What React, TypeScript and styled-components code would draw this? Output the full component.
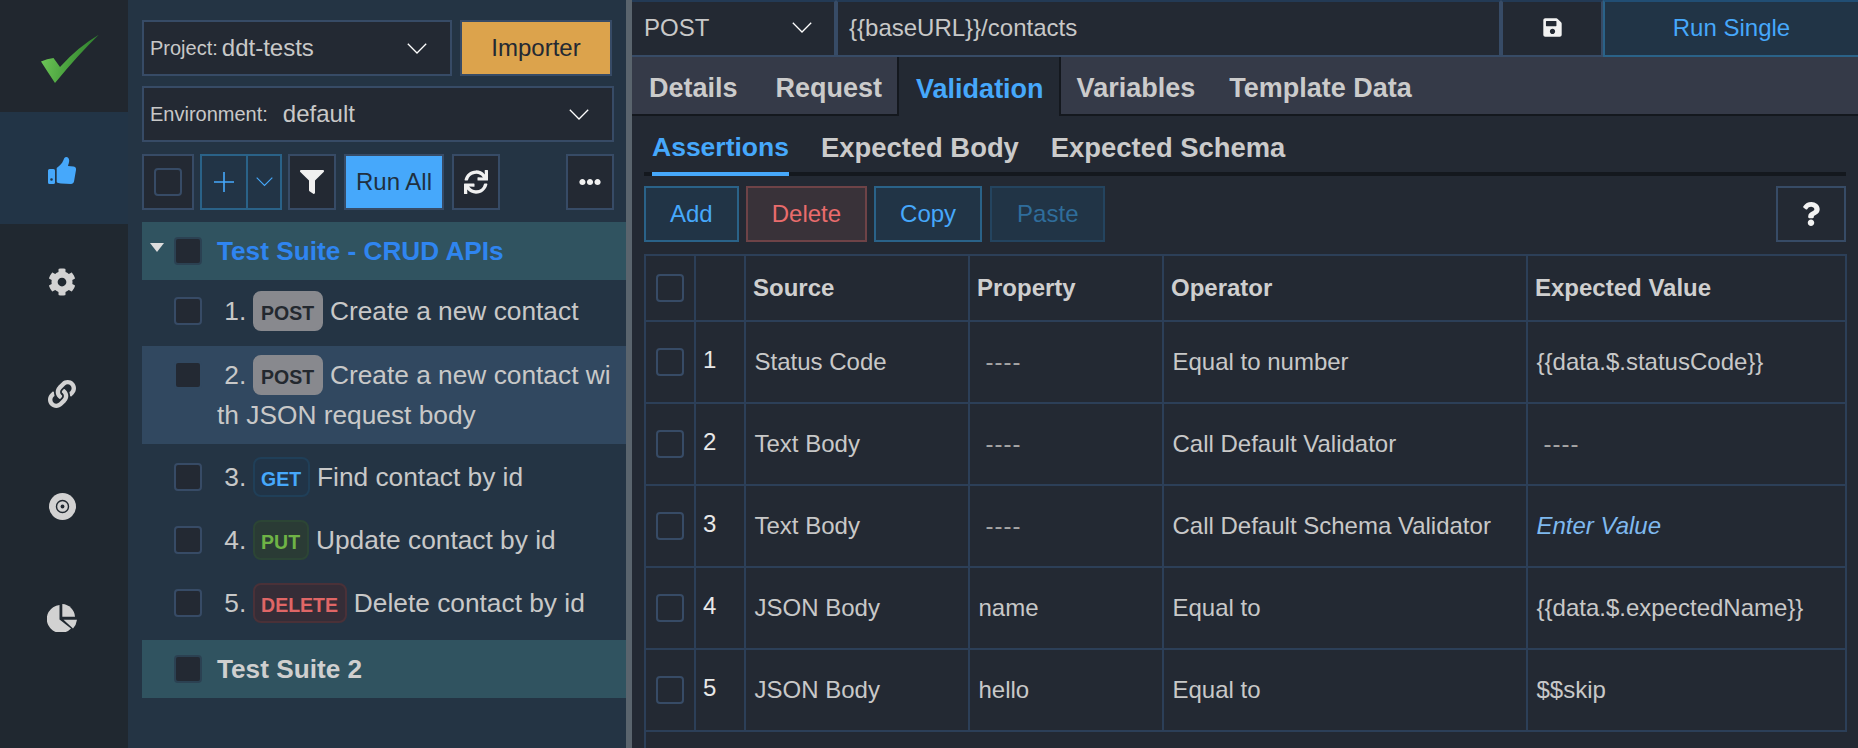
import React from 'react';
import styled, { createGlobalStyle } from 'styled-components';
import { FaCog, FaLink, FaFilter, FaSync, FaEllipsisH, FaSave, FaQuestion } from 'react-icons/fa';

const GlobalStyle = createGlobalStyle`
  html, body {
    margin: 0;
    padding: 0;
    background: #232933;
  }
  * {
    box-sizing: border-box;
  }
`;

const Page = styled.div`
  display: flex;
  width: 1858px;
  height: 748px;
  overflow: hidden;
  font-family: 'Liberation Sans', Arial, sans-serif;
  color: #c8c8c8;
`;

/* nav rail */
const Rail = styled.nav`
  display: flex;
  flex-direction: column;
  width: 128px;
  flex-shrink: 0;
  background: #202830;
`;

const RailItem = styled.div<{ $active?: boolean }>`
  display: flex;
  align-items: center;
  justify-content: center;
  height: 112px;
  padding: 4px 4px 0 0;
  font-size: 28px;
  color: ${(p) => (p.$active ? '#46a8fb' : '#d2d2d2')};
  background: ${(p) => (p.$active ? '#223446' : 'transparent')};
`;

const LogoItem = styled(RailItem)`
  padding: 5px 0 0 11px;
  background: #21272f;
`;

/* test list side */
const ListPane = styled.section`
  display: flex;
  flex-direction: column;
  width: 498px;
  flex-shrink: 0;
  padding: 20px 0 0 14px;
  background: #243444;
`;

const TopRow = styled.div<{ $pr: number }>`
  display: flex;
  gap: 8px;
  height: 56px;
  margin-bottom: 10px;
  padding-right: ${(p) => p.$pr}px;
`;

const Select = styled.div`
  display: flex;
  align-items: center;
  flex: 1;
  padding: 0 23px 0 6px;
  background: #232933;
  border: 2px solid #374b66;
`;

const SelectLabel = styled.span`
  font-size: 20px;
`;

const SelectValue = styled.span<{ $gap: number }>`
  flex: 1;
  margin-left: ${(p) => p.$gap}px;
  font-size: 24px;
`;

const ImportButton = styled.button`
  width: 152px;
  flex-shrink: 0;
  padding: 0;
  font: inherit;
  font-size: 24px;
  color: #232933;
  background: #dca34c;
  border: 2px solid #374b66;
`;

const Toolbar = styled.div`
  display: flex;
  height: 56px;
  margin: 2px 0 12px;
  padding-right: 12px;
`;

const ToolButton = styled.button<{ $w: number; $ml?: number }>`
  display: flex;
  align-items: center;
  justify-content: center;
  width: ${(p) => p.$w}px;
  margin-left: ${(p) => p.$ml ?? 0}px;
  padding: 0;
  font: inherit;
  font-size: 24px;
  color: #f0f0f0;
  background: #232933;
  border: 2px solid #374b66;
`;

const RunAll = styled(ToolButton)`
  color: #20303f;
  background: #46a8fb;
`;

const SplitButton = styled.div`
  display: flex;
  width: 82px;
  margin-left: 6px;
  background: #223446;
  border: 2px solid #2a6288;
`;

const SplitPart = styled.span<{ $w: number; $divide?: boolean }>`
  display: flex;
  align-items: center;
  justify-content: center;
  width: ${(p) => p.$w}px;
  border-right: ${(p) => (p.$divide ? '2px solid #2a6288' : 'none')};
`;

const Check = styled.span<{ $tone?: 'row' | 'suite' | 'selected' }>`
  display: block;
  width: 28px;
  height: 28px;
  flex-shrink: 0;
  background: #232933;
  border-radius: 4px;
  border: 2px solid
    ${(p) =>
      p.$tone === 'selected' ? '#314860' : p.$tone === 'suite' ? '#2b4152' : '#374b66'};
`;

const SuiteRow = styled.div<{ $mt: number }>`
  display: flex;
  align-items: center;
  height: 58px;
  margin-top: ${(p) => p.$mt}px;
  padding-left: 8px;
  background: #305360;
`;

const Caret = styled.span<{ $show?: boolean }>`
  width: 0;
  height: 0;
  margin: -8px 10px 0 0;
  border-left: 7px solid transparent;
  border-right: 7px solid transparent;
  border-top: 9px solid ${(p) => (p.$show ? '#dddddd' : 'transparent')};
`;

const SuiteTitle = styled.span<{ $accent?: boolean }>`
  margin-left: 15px;
  font-size: 26.2px;
  font-weight: 700;
  color: ${(p) => (p.$accent ? '#2f85f0' : '#cfcfcf')};
`;

const TestRow = styled.div<{ $selected?: boolean; $mt: number }>`
  display: flex;
  align-items: flex-start;
  margin-top: ${(p) => p.$mt}px;
  padding: ${(p) => (p.$selected ? '9px' : '8px')} 10px ${(p) => (p.$selected ? '9px' : '8px')} 32px;
  background: ${(p) => (p.$selected ? '#314860' : 'transparent')};
`;

const RowCheck = styled.span`
  display: block;
  margin-top: 6px;
`;

const TestText = styled.div`
  margin-left: 15px;
  flex: 1;
  font-size: 26.3px;
  line-height: 40px;
  word-break: break-all;
`;

const badgeTones = {
  POST: { bg: '#88898e', border: '#88898e', fg: '#23282f' },
  GET: { bg: '#213447', border: '#203f58', fg: '#46a8fb' },
  PUT: { bg: '#2a3b35', border: '#2c4535', fg: '#6fb346' },
  DELETE: { bg: '#352d37', border: '#4a3138', fg: '#e06666' },
};

const Badge = styled.span<{ $m: keyof typeof badgeTones }>`
  display: inline-block;
  height: 40px;
  margin-left: -1px;
  padding: 2px 6.5px 0;
  vertical-align: top;
  font-size: 19.5px;
  font-weight: 700;
  line-height: 36px;
  word-break: normal;
  color: ${(p) => badgeTones[p.$m].fg};
  background: ${(p) => badgeTones[p.$m].bg};
  border: 2px solid ${(p) => badgeTones[p.$m].border};
  border-radius: 8px;
`;

const Gutter = styled.div`
  width: 6px;
  flex-shrink: 0;
  background: #5a646d;
`;

/* editor side */
const Editor = styled.main`
  display: flex;
  flex-direction: column;
  flex: 1;
  min-width: 0;
  background: #232933;
`;

const UrlBar = styled.div`
  display: flex;
  height: 57px;
  flex-shrink: 0;
`;

const UrlCell = styled.div<{ $w?: number }>`
  display: flex;
  align-items: center;
  ${(p) => (p.$w ? `width: ${p.$w}px; flex-shrink: 0;` : 'flex: 1;')}
  padding-bottom: 2px;
  font-size: 24px;
  border: 2px solid #374b66;
  border-top-color: #233a55;
`;

const MethodCell = styled(UrlCell)`
  justify-content: space-between;
  padding: 0 22px 2px 12px;
  border-left: none;
`;

const AddressCell = styled(UrlCell)`
  padding-left: 11px;
`;

const SaveCell = styled(UrlCell)`
  justify-content: center;
  color: #f2f2f2;
`;

const RunCell = styled(UrlCell)`
  justify-content: center;
  color: #46a8fb;
  background: #213446;
  border-color: #2a6288;
  border-top-color: #214e74;
  border-right: none;
`;

const TabBar = styled.div`
  display: flex;
  height: 59px;
  flex-shrink: 0;
  background: #353a48;
  border-bottom: 2px solid #14181e;
`;

const Tab = styled.div<{ $active?: boolean; $after?: number }>`
  display: flex;
  align-items: center;
  height: ${(p) => (p.$active ? '59px' : '57px')};
  padding: 6px ${(p) => (p.$active ? '15px' : '17px')} 0 17px;
  margin-right: ${(p) => p.$after ?? 0}px;
  font-size: 27px;
  font-weight: 700;
  color: ${(p) => (p.$active ? '#46a8fb' : '#cbcbcb')};
  background: ${(p) => (p.$active ? '#232933' : 'transparent')};
  box-shadow: ${(p) => (p.$active ? '-2px 0 0 #14181e, 2px 0 0 #14181e' : 'none')};
`;

const Body = styled.div`
  display: flex;
  flex-direction: column;
  flex: 1;
  min-height: 0;
  padding: 0 12px;
`;

const SubTabs = styled.div`
  display: flex;
  gap: 32px;
  height: 60px;
  flex-shrink: 0;
  padding-left: 8px;
  border-bottom: 4px solid #14181e;
`;

const SubTab = styled.div<{ $active?: boolean }>`
  height: 60px;
  padding-top: 16px;
  font-size: ${(p) => (p.$active ? '26.5px' : '27.4px')};
  font-weight: 700;
  color: ${(p) => (p.$active ? '#46a8fb' : '#cbcbcb')};
  border-bottom: 4px solid ${(p) => (p.$active ? '#46a8fb' : 'transparent')};
`;

const ActionRow = styled.div`
  display: flex;
  gap: 7px;
  height: 56px;
  margin: 10px 0 12px;
  flex-shrink: 0;
`;

const actionTones = {
  add: { bg: '#213446', border: '#2a6288', fg: '#46a8fb' },
  del: { bg: '#393239', border: '#6e4347', fg: '#e96c6c' },
  off: { bg: '#213446', border: '#24445f', fg: '#2f6d9b' },
};

const ActionButton = styled.button<{ $tone: keyof typeof actionTones }>`
  padding: 0 24px;
  font: inherit;
  font-size: 24px;
  color: ${(p) => actionTones[p.$tone].fg};
  background: ${(p) => actionTones[p.$tone].bg};
  border: 2px solid ${(p) => actionTones[p.$tone].border};
`;

const PasteButton = styled(ActionButton)`
  margin-left: 1px;
  padding: 0 25px;
`;

const HelpButton = styled.button`
  display: flex;
  align-items: center;
  justify-content: center;
  width: 70px;
  margin-left: auto;
  padding: 0;
  font-size: 24px;
  color: #f2f2f2;
  background: #232933;
  border: 2px solid #374b66;
`;

const TableWrap = styled.div`
  flex: 1;
  min-height: 0;
  border-left: 2px solid #2c3f58;
`;

const Table = styled.table`
  width: 1200px;
  table-layout: fixed;
  border-collapse: collapse;
  font-size: 24px;
`;

const HeadCell = styled.th<{ $w: number }>`
  width: ${(p) => p.$w}px;
  height: 66px;
  padding: 0 0 0 7px;
  text-align: left;
  font-weight: 700;
  color: #cfcfcf;
  border: 2px solid #2c3f58;
  &:first-child {
    border-left: none;
  }
`;

const Cell = styled.td`
  height: 82px;
  padding: 0 0 0 8.5px;
  border: 2px solid #2c3f58;
  white-space: nowrap;
  &:first-child {
    border-left: none;
  }
`;

const CheckCell = styled(Cell)`
  padding-left: 10px;
`;

const HeadCheckCell = styled(HeadCell)`
  padding-left: 10px;
`;

const NumberCell = styled(Cell)`
  padding: 0 0 4px 7px;
  color: #e8e8e8;
`;

const Dashes = styled.span`
  margin-left: 7px;
  letter-spacing: 1px;
  color: #a4a4a4;
`;

const Placeholder = styled.span`
  font-style: italic;
  color: #7fb9ef;
`;

function Chevron({ w = 20, color = '#ffffff' }: { w?: number; color?: string }) {
  return (
    <svg width={w} height={w * 0.55} viewBox="0 0 20 11" fill="none">
      <path d="M0.8 0.8 L10 10 L19.2 0.8" stroke={color} strokeWidth="1.3" />
    </svg>
  );
}

function Logo() {
  return (
    <svg width="60" height="50" viewBox="0 0 60 50">
      <defs>
        <linearGradient id="tick" x1="0" y1="0" x2="1" y2="0.2">
          <stop offset="0" stopColor="#74cc5c" />
          <stop offset="0.55" stopColor="#4ba33f" />
          <stop offset="1" stopColor="#2c7a2c" />
        </linearGradient>
      </defs>
      <path
        d="M1 27.5 Q7 24.5 13.5 24 L20 33 Q38 13 58.8 0.8 Q38 21 15 49 Q7 37 1 27.5 Z"
        fill="url(#tick)"
      />
    </svg>
  );
}

function ThumbIcon() {
  return (
    <svg width="28" height="27" viewBox="0 0 28 27" fill="currentColor">
      <path
        fillRule="evenodd"
        d="M1.5 12H5.5A1.5 1.5 0 0 1 7 13.5V25.5A1.5 1.5 0 0 1 5.5 27H1.5A1.5 1.5 0 0 1 0 25.5V13.5A1.5 1.5 0 0 1 1.5 12ZM3.5 21.2A1.3 1.3 0 1 0 3.5 23.8A1.3 1.3 0 1 0 3.5 21.2Z"
      />
      <path d="M8.7 11C11 9 14 7 15.5 3C16 1 17 0 18.2 0C20 0 21.2 1.6 21.2 3.5C21.2 5.5 20.3 7.5 20 9L25.5 9.6C27.4 9.8 28.3 11.3 28 13L26 24.5C25.7 26 24.5 27 23 27L13 26.5C11 26.3 9.5 26 8.7 25Z" />
    </svg>
  );
}

function TargetIcon() {
  return (
    <svg width="27" height="27" viewBox="0 0 27 27">
      <circle cx="13.5" cy="13.5" r="13.5" fill="currentColor" />
      <circle cx="13.5" cy="13.5" r="6" fill="none" stroke="#202830" strokeWidth="1.4" />
      <circle cx="13.5" cy="13.5" r="1.9" fill="#202830" />
    </svg>
  );
}

function PieIcon() {
  return (
    <svg width="30" height="28" viewBox="0 0 30 28" fill="currentColor">
      <path d="M12.5 1A14 14 0 1 0 24 24.5L12.5 15.5Z" />
      <path d="M15.3 0A13.5 13.5 0 0 1 28 12.7H15.3Z" />
      <path d="M16.5 15.8H30Q29.3 21 26 24.6Z" />
    </svg>
  );
}

const tests: { n: number; m: keyof typeof badgeTones; text: string; mt: number }[] = [
  { n: 3, m: 'GET', text: 'Find contact by id', mt: 5 },
  { n: 4, m: 'PUT', text: 'Update contact by id', mt: 7 },
  { n: 5, m: 'DELETE', text: 'Delete contact by id', mt: 7 },
];

const assertions = [
  { source: 'Status Code', prop: '', op: 'Equal to number', value: '{{data.$.statusCode}}' },
  { source: 'Text Body', prop: '', op: 'Call Default Validator', value: '' },
  { source: 'Text Body', prop: '', op: 'Call Default Schema Validator', value: 'enter' },
  { source: 'JSON Body', prop: 'name', op: 'Equal to', value: '{{data.$.expectedName}}' },
  { source: 'JSON Body', prop: 'hello', op: 'Equal to', value: '$$skip' },
];

export default function App() {
  return (
    <Page>
      <GlobalStyle />
      <Rail>
        <LogoItem>
          <Logo />
        </LogoItem>
        <RailItem $active>
          <ThumbIcon />
        </RailItem>
        <RailItem>
          <FaCog />
        </RailItem>
        <RailItem>
          <FaLink />
        </RailItem>
        <RailItem>
          <TargetIcon />
        </RailItem>
        <RailItem>
          <PieIcon />
        </RailItem>
      </Rail>

      <ListPane>
        <TopRow $pr={14}>
          <Select>
            <SelectLabel>Project:</SelectLabel>
            <SelectValue $gap={4}>ddt-tests</SelectValue>
            <Chevron />
          </Select>
          <ImportButton>Importer</ImportButton>
        </TopRow>
        <TopRow $pr={12}>
          <Select>
            <SelectLabel>Environment:</SelectLabel>
            <SelectValue $gap={15}>default</SelectValue>
            <Chevron />
          </Select>
        </TopRow>
        <Toolbar>
          <ToolButton $w={52}>
            <Check />
          </ToolButton>
          <SplitButton>
            <SplitPart $w={46} $divide>
              <svg width="20" height="20" viewBox="0 0 20 20">
                <path d="M10 0V20M0 10H20" stroke="#46a8fb" strokeWidth="1.6" />
              </svg>
            </SplitPart>
            <SplitPart $w={32}>
              <Chevron w={17} color="#46a8fb" />
            </SplitPart>
          </SplitButton>
          <ToolButton $w={48} $ml={6}>
            <FaFilter />
          </ToolButton>
          <RunAll $w={100} $ml={8}>
            Run All
          </RunAll>
          <ToolButton $w={48} $ml={8}>
            <FaSync />
          </ToolButton>
          <ToolButton $w={48} $ml={66}>
            <FaEllipsisH size={22} />
          </ToolButton>
        </Toolbar>

        <SuiteRow $mt={0}>
          <Caret $show />
          <Check $tone="suite" />
          <SuiteTitle $accent>Test Suite - CRUD APIs</SuiteTitle>
        </SuiteRow>
        <TestRow $mt={3}>
          <RowCheck>
            <Check />
          </RowCheck>
          <TestText>
            &nbsp;1. <Badge $m="POST">POST</Badge> Create a new contact
          </TestText>
        </TestRow>
        <TestRow $selected $mt={7}>
          <RowCheck>
            <Check $tone="selected" />
          </RowCheck>
          <TestText>
            &nbsp;2. <Badge $m="POST">POST</Badge> Create a new contact with JSON request body
          </TestText>
        </TestRow>
        {tests.map((t) => (
          <TestRow key={t.n} $mt={t.mt}>
            <RowCheck>
              <Check />
            </RowCheck>
            <TestText>
              &nbsp;{t.n}. <Badge $m={t.m}>{t.m}</Badge> {t.text}
            </TestText>
          </TestRow>
        ))}
        <SuiteRow $mt={9}>
          <Caret />
          <Check $tone="suite" />
          <SuiteTitle>Test Suite 2</SuiteTitle>
        </SuiteRow>
      </ListPane>

      <Gutter />

      <Editor>
        <UrlBar>
          <MethodCell $w={204}>
            POST
            <Chevron />
          </MethodCell>
          <AddressCell>{'{{baseURL}}/contacts'}</AddressCell>
          <SaveCell $w={102}>
            <FaSave size={21} />
          </SaveCell>
          <RunCell $w={255}>Run Single</RunCell>
        </UrlBar>
        <TabBar>
          <Tab $after={4}>Details</Tab>
          <Tab>Request</Tab>
          <Tab $active $after={1}>
            Validation
          </Tab>
          <Tab>Variables</Tab>
          <Tab>Template Data</Tab>
        </TabBar>
        <Body>
          <SubTabs>
            <SubTab $active>Assertions</SubTab>
            <SubTab>Expected Body</SubTab>
            <SubTab>Expected Schema</SubTab>
          </SubTabs>
          <ActionRow>
            <ActionButton $tone="add">Add</ActionButton>
            <ActionButton $tone="del">Delete</ActionButton>
            <ActionButton $tone="add">Copy</ActionButton>
            <PasteButton $tone="off">Paste</PasteButton>
            <HelpButton>
              <FaQuestion />
            </HelpButton>
          </ActionRow>
          <TableWrap>
            <Table>
              <thead>
                <tr>
                  <HeadCheckCell $w={49}>
                    <Check />
                  </HeadCheckCell>
                  <HeadCell $w={50} />
                  <HeadCell $w={224}>Source</HeadCell>
                  <HeadCell $w={194}>Property</HeadCell>
                  <HeadCell $w={364}>Operator</HeadCell>
                  <HeadCell $w={319}>Expected Value</HeadCell>
                </tr>
              </thead>
              <tbody>
                {assertions.map((a, i) => (
                  <tr key={i}>
                    <CheckCell>
                      <Check />
                    </CheckCell>
                    <NumberCell>{i + 1}</NumberCell>
                    <Cell>{a.source}</Cell>
                    <Cell>{a.prop || <Dashes>----</Dashes>}</Cell>
                    <Cell>{a.op}</Cell>
                    <Cell>
                      {a.value === 'enter' ? (
                        <Placeholder>Enter Value</Placeholder>
                      ) : (
                        a.value || <Dashes>----</Dashes>
                      )}
                    </Cell>
                  </tr>
                ))}
              </tbody>
            </Table>
          </TableWrap>
        </Body>
      </Editor>
    </Page>
  );
}
